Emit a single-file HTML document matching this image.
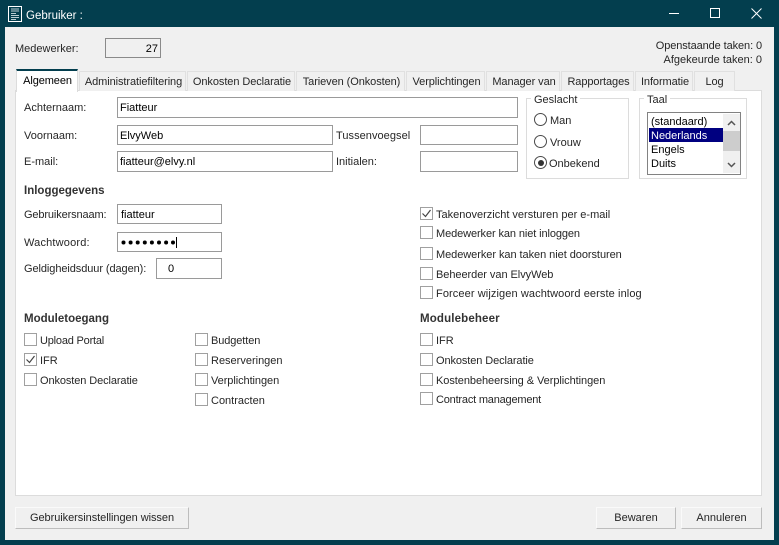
<!DOCTYPE html>
<html><head><meta charset="utf-8">
<style>
html,body{margin:0;padding:0}
body{width:779px;height:545px;overflow:hidden;background:#033e4e;font-family:"Liberation Sans",Arial,sans-serif;font-size:11px;color:#262626;position:relative}
div,span.a{position:absolute;box-sizing:border-box}
.t{white-space:nowrap;line-height:14px;height:14px;margin-top:1px}
.b{font-weight:bold;color:#333;font-size:11.500px}
.i{background:#fff;border:1px solid #9a9a9a;line-height:20px;padding-left:2px;white-space:nowrap;color:#000}
.tab{height:20px;top:71px;background:#f0f0f0;border:1px solid #e0e0e0;border-bottom:none;text-align:center;line-height:20px;white-space:nowrap;padding-left:2px;letter-spacing:-.08px}
.c{width:13px;height:13px;background:#fff;border:1px solid #a0a0a0}
.g{border:1px solid #dcdcdc}
.btn{background:#f0f0f0;border:1px solid;border-color:#fafafa #bdbdbd #bdbdbd #fafafa;text-align:center;line-height:21px;height:22px;top:507px}
.r{width:13px;height:13px;border:1px solid #4a4a4a;border-radius:50%;background:#fff}
</style></head><body>
<svg style="position:absolute;left:8px;top:6px" width="14" height="16" viewBox="0 0 14 16"><rect x=".5" y=".5" width="13" height="15" fill="#033e4e" stroke="#fff"/><path d="M3 3h8M3 5h8M3 7.500h5M3 9.500h8M3 11.500h8M3 13.500h5" stroke="#b9ccd2" stroke-width="1"/></svg>
<div class="t" style="left:26px;top:8px;color:#fff;font-size:11.500px">Gebruiker :</div>
<div style="left:669px;top:13px;width:10px;height:1px;background:#fff"></div>
<svg style="position:absolute;left:710px;top:8px" width="10" height="10"><rect x=".5" y=".5" width="9" height="9" fill="none" stroke="#fff"/></svg>
<svg style="position:absolute;left:751px;top:8px" width="11" height="11"><path d="M.5.500l10 10M10.500.500l-10 10" stroke="#fff"/></svg>

<div style="left:5px;top:27px;width:769px;height:513px;background:#f0f0f0"></div>
<div class="t" style="left:15px;top:41px">Medewerker:</div>
<div style="left:105px;top:38px;width:56px;height:20px;border:1px solid #8a8a8a;text-align:right;padding-right:2px;line-height:20px;color:#000">27</div>
<div class="t" style="right:17px;top:38px;letter-spacing:-.1px">Openstaande taken: 0</div>
<div class="t" style="right:17px;top:52px">Afgekeurde taken: 0</div>

<div style="left:15px;top:90px;width:747px;height:406px;background:#fff;border:1px solid #dcdcdc"></div>
<div class="tab" style="left:79px;width:107px">Administratiefiltering</div>
<div class="tab" style="left:187px;width:108px">Onkosten Declaratie</div>
<div class="tab" style="left:296px;width:109px">Tarieven (Onkosten)</div>
<div class="tab" style="left:406px;width:79px">Verplichtingen</div>
<div class="tab" style="left:486px;width:74px">Manager van</div>
<div class="tab" style="left:561px;width:73px">Rapportages</div>
<div class="tab" style="left:635px;width:58px">Informatie</div>
<div class="tab" style="left:694px;width:41px;padding-left:0">Log</div>
<div style="left:16px;top:69px;width:62px;height:23px;background:#fff;border-top:2px solid #033e4e;border-right:1px solid #dcdcdc;border-left:1px solid #dcdcdc;text-align:center;line-height:20px;color:#000;padding-left:1px;letter-spacing:-.1px">Algemeen</div>

<div class="t" style="left:24px;top:100px">Achternaam:</div>
<div class="i" style="left:117px;top:97px;width:401px;height:21px">Fiatteur</div>
<div class="t" style="left:24px;top:128px">Voornaam:</div>
<div class="i" style="left:117px;top:125px;width:216px;height:20px">ElvyWeb</div>
<div class="t" style="left:336px;top:128px;letter-spacing:.05px">Tussenvoegsel</div>
<div class="i" style="left:420px;top:125px;width:98px;height:20px"></div>
<div class="t" style="left:24px;top:154px">E-mail:</div>
<div class="i" style="left:117px;top:151px;width:216px;height:21px">fiatteur@elvy.nl</div>
<div class="t" style="left:336px;top:154px">Initialen:</div>
<div class="i" style="left:420px;top:151px;width:98px;height:21px"></div>

<div class="g" style="left:526px;top:98px;width:103px;height:81px"></div>
<div class="t" style="left:531px;top:92px;background:#fff;padding:0 3px">Geslacht</div>
<div class="r" style="left:534px;top:113px"></div><div class="t" style="left:550px;top:113px">Man</div>
<div class="r" style="left:534px;top:135px"></div><div class="t" style="left:550px;top:135px">Vrouw</div>
<div class="r" style="left:534px;top:156px"></div><div style="left:538px;top:160px;width:6px;height:6px;border-radius:50%;background:#333"></div><div class="t" style="left:549px;top:156px">Onbekend</div>

<div class="g" style="left:639px;top:98px;width:108px;height:81px"></div>
<div class="t" style="left:644px;top:92px;background:#fff;padding:0 3px">Taal</div>
<div style="left:647px;top:112px;width:94px;height:63px;border:1px solid #828282;background:#fff"></div>
<div style="left:723px;top:114px;width:17px;height:59px;background:#f0f0f0"></div>
<div style="left:723px;top:131px;width:17px;height:20px;background:#cdcdcd"></div>
<svg style="position:absolute;left:727px;top:119px" width="9" height="50"><path d="M1 6l3.500-3.500L8 6M1 44l3.500 3.500L8 44" fill="none" stroke="#555" stroke-width="1.500"/></svg>
<div style="left:649px;top:128px;width:74px;height:14px;background:#000080"></div>
<div class="t" style="left:651px;top:114px;color:#000">(standaard)</div>
<div class="t" style="left:651px;top:128px;color:#fff">Nederlands</div>
<div class="t" style="left:651px;top:142px;color:#000">Engels</div>
<div class="t" style="left:651px;top:156px;color:#000">Duits</div>

<div class="t b" style="left:24px;top:183px">Inloggegevens</div>
<div class="t" style="left:24px;top:207px;letter-spacing:-.13px">Gebruikersnaam:</div>
<div class="i" style="left:117px;top:204px;width:105px;height:20px;padding-left:3px">fiatteur</div>
<div class="t" style="left:24px;top:235px;letter-spacing:.18px">Wachtwoord:</div>
<div class="i" style="left:117px;top:232px;width:105px;height:20px"></div>
<svg style="position:absolute;left:121px;top:237px" width="56" height="11"><g fill="#000"><circle cx="2.500" cy="5.500" r="2"/><circle cx="9.600" cy="5.500" r="2"/><circle cx="16.700" cy="5.500" r="2"/><circle cx="23.800" cy="5.500" r="2"/><circle cx="30.900" cy="5.500" r="2"/><circle cx="38" cy="5.500" r="2"/><circle cx="45.100" cy="5.500" r="2"/><circle cx="52" cy="5.500" r="2"/></g><rect x="55" y="0" width="1" height="11"/></svg>
<div class="t" style="left:24px;top:261px;letter-spacing:-.08px">Geldigheidsduur (dagen):</div>
<div class="i" style="left:156px;top:258px;width:66px;height:21px;padding-left:11px">0</div>

<div class="t b" style="left:24px;top:311px">Moduletoegang</div>
<div class="c" style="left:24px;top:333px"></div><div class="t" style="left:40px;top:333px;letter-spacing:-.2px">Upload Portal</div>
<div class="c" style="left:24px;top:353px"></div><div class="t" style="left:40px;top:353px">IFR</div>
<svg style="position:absolute;left:24px;top:353px" width="13" height="13"><path d="M2.500 6.500l3 3 5-6.500" fill="none" stroke="#444" stroke-width="1.200"/></svg>
<div class="c" style="left:24px;top:373px"></div><div class="t" style="left:40px;top:373px;letter-spacing:-.1px">Onkosten Declaratie</div>
<div class="c" style="left:195px;top:333px"></div><div class="t" style="left:211px;top:333px;letter-spacing:-.1px">Budgetten</div>
<div class="c" style="left:195px;top:353px"></div><div class="t" style="left:211px;top:353px">Reserveringen</div>
<div class="c" style="left:195px;top:373px"></div><div class="t" style="left:211px;top:373px;letter-spacing:-.07px">Verplichtingen</div>
<div class="c" style="left:195px;top:393px"></div><div class="t" style="left:211px;top:393px">Contracten</div>

<div class="c" style="left:420px;top:207px"></div><div class="t" style="left:436px;top:207px">Takenoverzicht versturen per e-mail</div>
<svg style="position:absolute;left:420px;top:207px" width="13" height="13"><path d="M2.500 6.500l3 3 5-6.500" fill="none" stroke="#444" stroke-width="1.200"/></svg>
<div class="c" style="left:420px;top:226px"></div><div class="t" style="left:436px;top:226px;letter-spacing:-.1px">Medewerker kan niet inloggen</div>
<div class="c" style="left:420px;top:247px"></div><div class="t" style="left:436px;top:247px;letter-spacing:-.055px">Medewerker kan taken niet doorsturen</div>
<div class="c" style="left:420px;top:267px"></div><div class="t" style="left:436px;top:267px;letter-spacing:-.05px">Beheerder van ElvyWeb</div>
<div class="c" style="left:420px;top:286px"></div><div class="t" style="left:436px;top:286px;letter-spacing:.1px">Forceer wijzigen wachtwoord eerste inlog</div>

<div class="t b" style="left:420px;top:311px;letter-spacing:.15px">Modulebeheer</div>
<div class="c" style="left:420px;top:333px"></div><div class="t" style="left:436px;top:333px">IFR</div>
<div class="c" style="left:420px;top:353px"></div><div class="t" style="left:436px;top:353px;letter-spacing:-.1px">Onkosten Declaratie</div>
<div class="c" style="left:420px;top:373px"></div><div class="t" style="left:436px;top:373px;letter-spacing:-.06px">Kostenbeheersing &amp; Verplichtingen</div>
<div class="c" style="left:420px;top:392px"></div><div class="t" style="left:436px;top:392px;letter-spacing:-.2px">Contract management</div>

<div class="btn" style="left:15px;width:174px;letter-spacing:-.05px">Gebruikersinstellingen wissen</div>
<div class="btn" style="left:596px;width:80px">Bewaren</div>
<div class="btn" style="left:681px;width:81px">Annuleren</div>
</body></html>
